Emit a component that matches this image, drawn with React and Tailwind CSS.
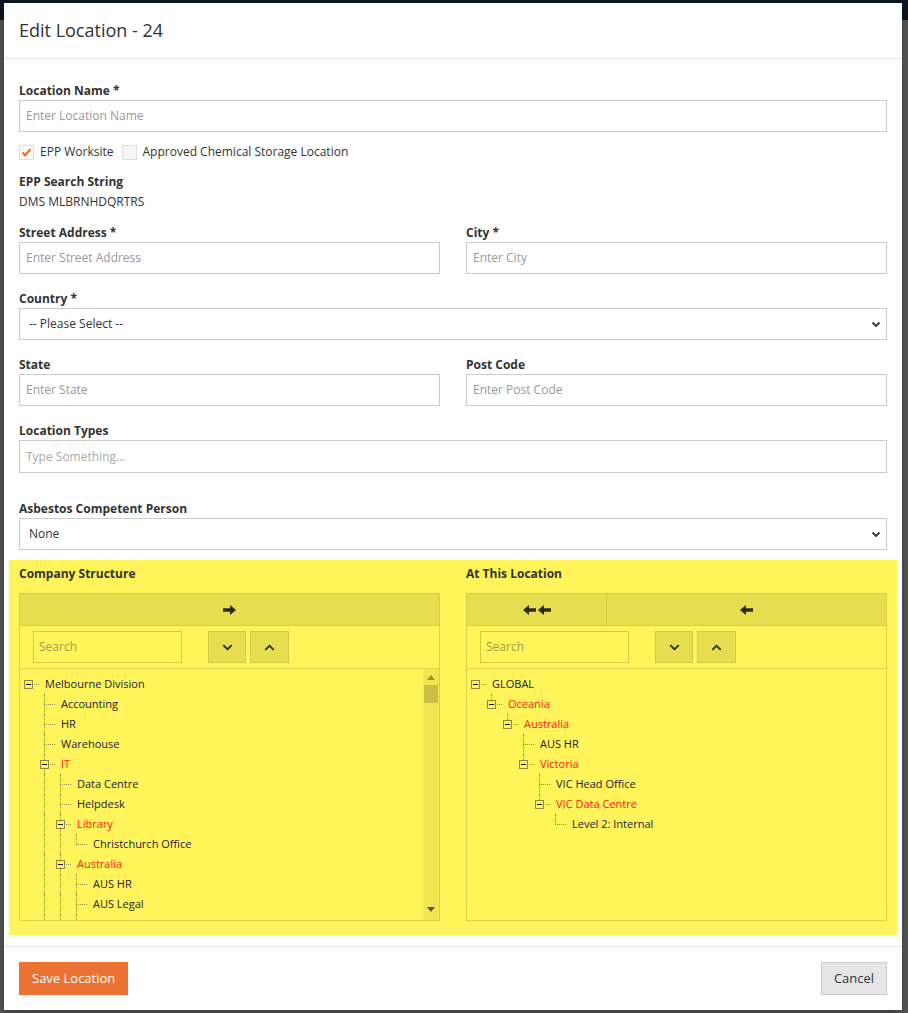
import React from 'react';
import { FaChevronDown, FaChevronUp } from 'react-icons/fa';

const leftTree = [
  {
    label: 'Melbourne Division',
    kids: [
      { label: 'Accounting' },
      { label: 'HR' },
      { label: 'Warehouse' },
      {
        label: 'IT',
        red: true,
        kids: [
          { label: 'Data Centre' },
          { label: 'Helpdesk' },
          { label: 'Library', red: true, kids: [{ label: 'Christchurch Office' }] },
          {
            label: 'Australia',
            red: true,
            kids: [
              { label: 'AUS HR' },
              { label: 'AUS Legal' },
              { label: 'Victoria', red: true, kids: [{ label: 'VIC Head Office' }] },
            ],
          },
          { label: 'Singapore' },
        ],
      },
      { label: 'Sales' },
    ],
  },
];

const rightTree = [
  {
    label: 'GLOBAL',
    kids: [
      {
        label: 'Oceania',
        red: true,
        kids: [
          {
            label: 'Australia',
            red: true,
            kids: [
              { label: 'AUS HR' },
              {
                label: 'Victoria',
                red: true,
                kids: [
                  { label: 'VIC Head Office' },
                  { label: 'VIC Data Centre', red: true, kids: [{ label: 'Level 2: Internal' }] },
                ],
              },
            ],
          },
        ],
      },
    ],
  },
];

// flatten nested nodes into rows with guide info
function flatten(nodes, depth = 0, guides = [], out = []) {
  nodes.forEach((n, i) => {
    const last = i === nodes.length - 1;
    out.push({ ...n, depth, last, guides });
    if (n.kids) flatten(n.kids, depth + 1, [...guides, depth > 0 && !last], out);
  });
  return out;
}

const dot = 'border-[#8f8a45]';

function Arrow({ left = false }) {
  return (
    <svg width="13" height="10" viewBox="0 0 13 10" className={left ? 'rotate-180' : ''}>
      <path d="M0 3.3 H7 V0 L13 5 L7 10 V6.7 H0 Z" fill="#2b2b1c" />
    </svg>
  );
}

function TreeRow({ row }) {
  return (
    <div className="flex h-5 items-center whitespace-nowrap">
      {row.guides.map((g, i) => (
        <div key={i} className="relative h-5 w-4 shrink-0">
          {g && <div className={`absolute left-2 top-0 h-5 border-l border-dotted ${dot}`} />}
        </div>
      ))}
      <div className="relative h-5 w-4 shrink-0">
        {row.depth > 0 && (
          <div
            className={
              row.last
                ? `absolute left-2 top-0 h-[10px] border-l border-dotted ${dot}`
                : `absolute left-2 top-0 h-5 border-l border-dotted ${dot}`
            }
          />
        )}
        <div className={`absolute left-2 top-[10px] w-[11px] border-t border-dotted ${dot}`} />
        {row.kids && (
          <div className="absolute left-[4px] top-[6px] flex h-[9px] w-[9px] items-center justify-center border border-[#8f8a45] bg-[#fff459]">
            <div className="h-px w-[5px] bg-[#111]" />
          </div>
        )}
      </div>
      <span className={row.red ? 'ml-[9px] text-[#ff1a1a]' : 'ml-[9px] text-[#1b1b40]'}>{row.label}</span>
    </div>
  );
}

function Field({ label, placeholder, className = '' }) {
  return (
    <div className={className}>
      <div className="h-[17px] text-[12px] font-bold leading-[16px] text-[#333]">{label}</div>
      <div className="flex h-[32px] items-center border border-[#ccc] bg-white px-[6px] text-[12px] text-[#999]">
        {placeholder}
      </div>
    </div>
  );
}

function Select({ label, value, className = '' }) {
  return (
    <div className={className}>
      <div className="h-[17px] text-[12px] font-bold leading-[16px] text-[#333]">{label}</div>
      <div className="flex h-[32px] items-center justify-between border border-[#ccc] bg-white pl-[9px] pr-[4px] text-[12px] text-[#333]">
        <span>{value}</span>
        <svg width="12" height="12" viewBox="0 0 12 12">
          <path d="M2.5 4.5 L6 8 L9.5 4.5" fill="none" stroke="#333" strokeWidth="1.8" />
        </svg>
      </div>
    </div>
  );
}

function SearchRow() {
  return (
    <div className="flex items-center border-b border-[#dcd24a] pb-[5px] pl-[13px] pt-[5px]">
      <div className="flex h-[32px] w-[149px] items-center border border-[#d2c947] px-[5px] text-[12px] text-[#a39c4a]">
        Search
      </div>
      <div className="ml-[26px] flex h-[32px] w-[38px] items-center justify-center border border-[#d2c947] bg-[#e6dd4f] text-[#2b2b1c]">
        <FaChevronDown size={11} />
      </div>
      <div className="ml-[4px] flex h-[32px] w-[39px] items-center justify-center border border-[#d2c947] bg-[#e6dd4f] text-[#2b2b1c]">
        <FaChevronUp size={11} />
      </div>
    </div>
  );
}

export default function App() {
  // only the rows that fit the scroll box are drawn
  const left = flatten(leftTree).slice(0, 13);
  const right = flatten(rightTree);

  return (
    <div className="relative min-h-screen bg-[#5a5a5a] pt-[3px]" style={{ fontFamily: '"Open Sans", "Liberation Sans", sans-serif' }}>
      <div className="absolute left-0 top-0 h-[20px] w-full bg-[#0c1721]" />
      <div className="relative ml-[4px] w-[898px] bg-white shadow-[0_4px_12px_rgba(0,0,0,0.4)]">
        {/* header */}
        <div className="flex h-[56px] items-center border-b border-[#e5e5e5] px-[15px] text-[18px] text-[#333]">
          Edit Location - 24
        </div>

        {/* body */}
        <div className="px-[15px] pb-[11px] pt-[24px]">
          <Field label="Location Name *" placeholder="Enter Location Name" />

          <div className="mt-[12px] flex h-[16px] items-center text-[12px] text-[#333]">
            <div className="flex h-[15px] w-[15px] items-center justify-center border border-[#ddd] bg-[#fafafa]">
              <svg width="11" height="11" viewBox="0 0 11 11">
                <path d="M1.5 5.5 L4.2 8.3 L9.5 2.2" fill="none" stroke="#e8702a" strokeWidth="2.2" />
              </svg>
            </div>
            <span className="ml-[6px]">EPP Worksite</span>
            <div className="ml-[8px] h-[15px] w-[15px] border border-[#ddd] bg-[#f5f5f5]" />
            <span className="ml-[6px]">Approved Chemical Storage Location</span>
          </div>

          <div className="mt-[14px] h-[16px] text-[12px] font-bold leading-[16px] text-[#333]">EPP Search String</div>
          <div className="mt-[4px] h-[16px] text-[12px] leading-[16px] text-[#333]">DMS MLBRNHDQRTRS</div>

          <div className="mt-[15px] grid grid-cols-2 gap-x-[26px]">
            <Field label="Street Address *" placeholder="Enter Street Address" />
            <Field label="City *" placeholder="Enter City" />
          </div>

          <Select className="mt-[17px]" label="Country *" value="-- Please Select --" />

          <div className="mt-[17px] grid grid-cols-2 gap-x-[26px]">
            <Field label="State" placeholder="Enter State" />
            <Field label="Post Code" placeholder="Enter Post Code" />
          </div>

          <div className="mt-[17px]">
            <div className="h-[17px] text-[12px] font-bold leading-[16px] text-[#333]">Location Types</div>
            <div className="flex h-[33px] items-center border border-[#ccc] bg-white px-[6px] text-[12px] text-[#aaa]">
              Type Something...
            </div>
          </div>

          <Select className="mt-[28px]" label="Asbestos Competent Person" value="None" />

          {/* highlighted structure section */}
          <div className="mx-[-10px] mt-[10px] grid grid-cols-2 gap-x-[26px] bg-[#fff459] px-[10px] pb-[14px] pt-[6px]">
            <div>
              <div className="mb-[11px] h-[16px] text-[12px] font-bold leading-[16px] text-[#333]">Company Structure</div>
              <div className="flex h-[33px] items-center justify-center border border-[#d6cd48] bg-[#e6dd4f]">
                <Arrow />
              </div>
              <div className="border border-t-0 border-[#dcd24a]">
                <SearchRow />
                <div className="flex h-[251px] overflow-hidden">
                  <div className="flex-1 overflow-hidden pt-[5px] text-[11px]">
                    {left.map((r, i) => (
                      <TreeRow key={i} row={r} />
                    ))}
                  </div>
                  <div className="flex w-[16px] flex-col items-center bg-[#efe650] pt-[6px]">
                    <svg width="8" height="5" viewBox="0 0 8 5">
                      <path d="M0 5 L4 0 L8 5 Z" fill="#9a9337" />
                    </svg>
                    <div className="mt-[5px] h-[18px] w-[14px] bg-[#c8bf44]" />
                    <div className="flex-1" />
                    <svg className="mb-[8px]" width="8" height="5" viewBox="0 0 8 5">
                      <path d="M0 0 L8 0 L4 5 Z" fill="#5c5824" />
                    </svg>
                  </div>
                </div>
              </div>
            </div>

            <div>
              <div className="mb-[11px] h-[16px] text-[12px] font-bold leading-[16px] text-[#333]">At This Location</div>
              <div className="flex h-[33px] border border-[#d6cd48] bg-[#e6dd4f]">
                <div className="flex w-[140px] items-center justify-center gap-[2px] border-r border-[#d6cd48]">
                  <Arrow left />
                  <Arrow left />
                </div>
                <div className="flex flex-1 items-center justify-center">
                  <Arrow left />
                </div>
              </div>
              <div className="border border-t-0 border-[#dcd24a]">
                <SearchRow />
                <div className="h-[251px] overflow-hidden pt-[5px] text-[11px]">
                  {right.map((r, i) => (
                    <TreeRow key={i} row={r} />
                  ))}
                </div>
              </div>
            </div>
          </div>
        </div>

        {/* footer */}
        <div className="flex items-center justify-between border-t border-[#e5e5e5] px-[15px] pb-[15px] pt-[15px]">
          <button className="h-[33px] bg-[#ec7232] px-[13px] text-[13px] text-white">Save Location</button>
          <button className="h-[33px] w-[66px] border border-[#ccc] bg-[#e6e6e6] text-[13px] text-[#333]">Cancel</button>
        </div>
      </div>
    </div>
  );
}
